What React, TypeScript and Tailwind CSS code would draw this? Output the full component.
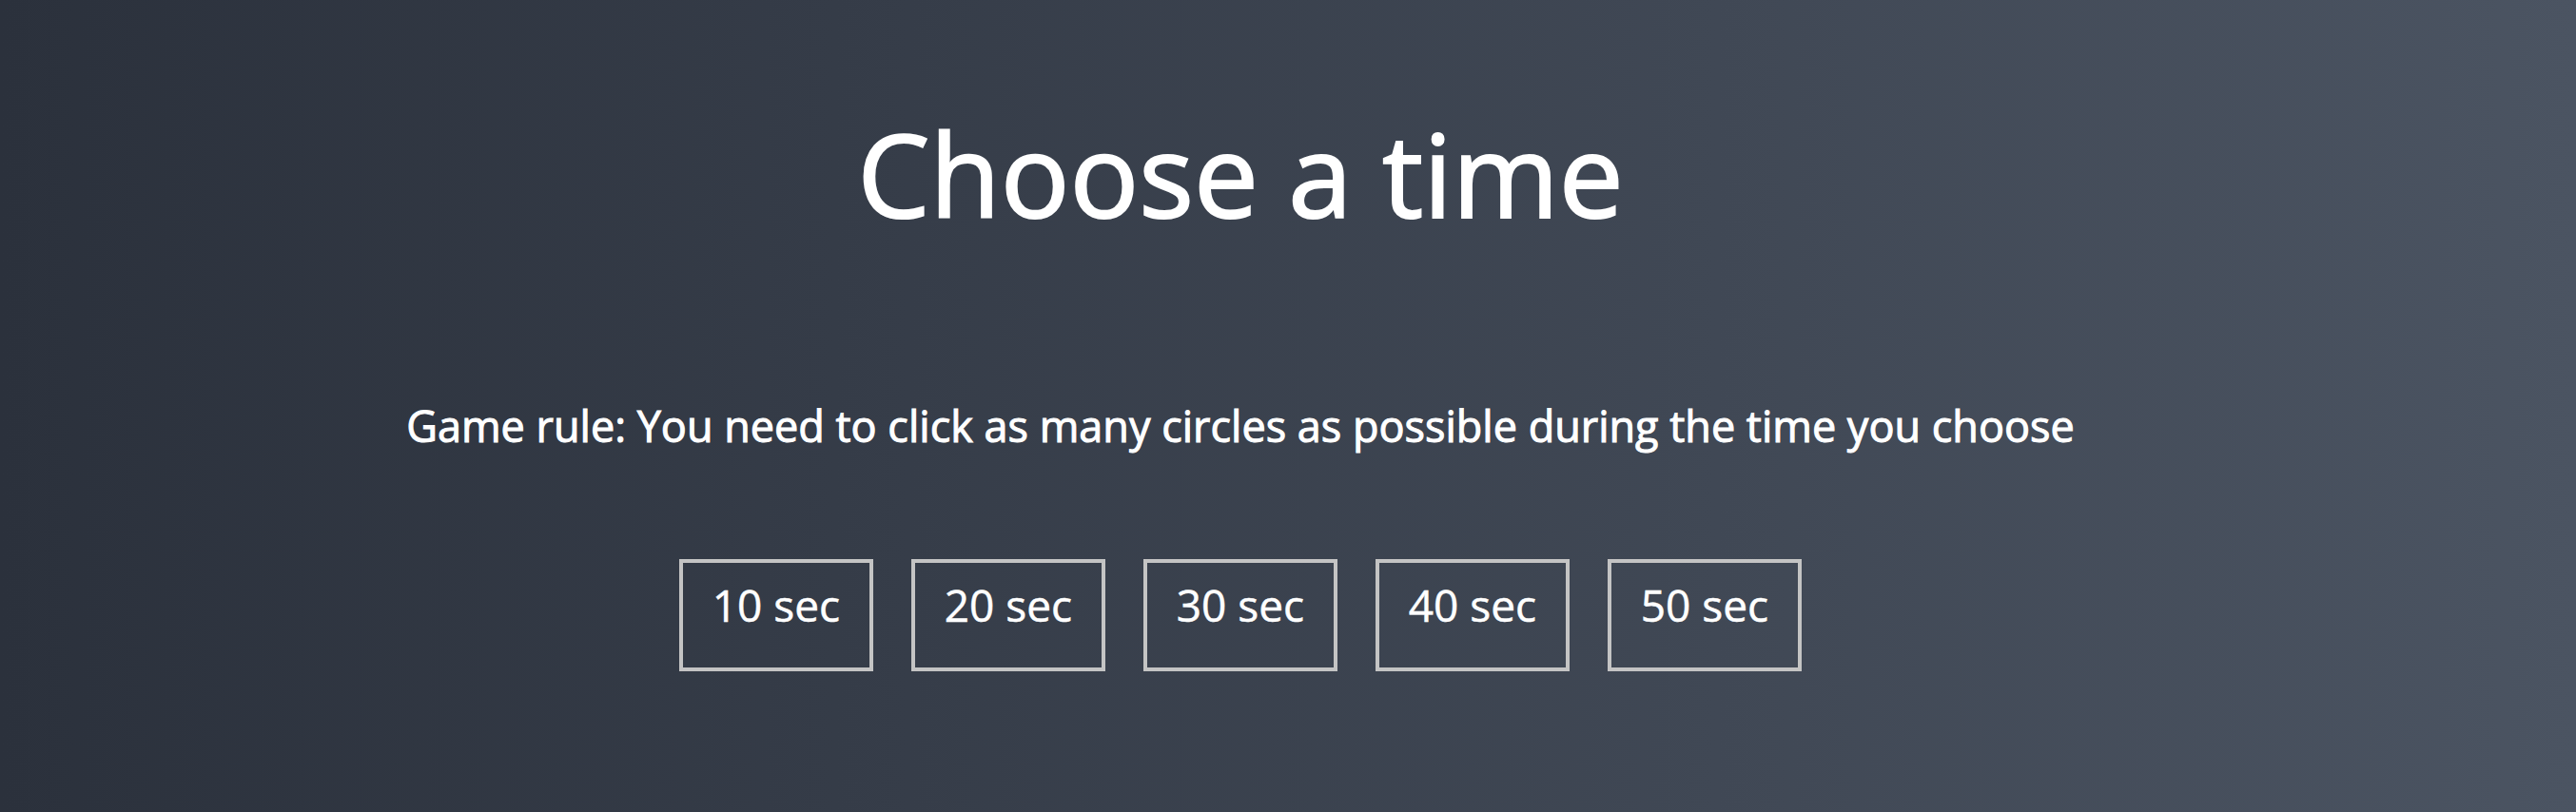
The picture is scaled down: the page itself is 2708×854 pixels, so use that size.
const TIMES = [10, 20, 30, 40, 50];

export default function App() {
  return (
    <div
      className="h-screen w-full overflow-hidden bg-gradient-to-r from-[#2b313c] to-[#4b5462] text-white pr-[100px]"
      style={{ fontFamily: '"Open Sans", "Liberation Sans", sans-serif' }}
    >
      <div className="flex flex-col items-center pt-[100px]">
        <h1 className="text-[121px] leading-[165px] font-normal [-webkit-text-stroke:2px_#fff]">
          Choose a time
        </h1>

        <p className="mt-[152px] text-[45px] leading-[61px] [-webkit-text-stroke:1px_#fff]">
          Game rule: You need to click as many circles as possible during the time you choose
        </p>

        <div className="mt-[110px] flex gap-[40px]">
          {TIMES.map((t) => (
            <button
              key={t}
              className="w-[204px] h-[118px] border-4 border-[#c4c4c4] flex justify-center pt-[13px] text-[46px] leading-[62px] [-webkit-text-stroke:0.5px_#fff]"
            >
              {t} sec
            </button>
          ))}
        </div>
      </div>
    </div>
  );
}
